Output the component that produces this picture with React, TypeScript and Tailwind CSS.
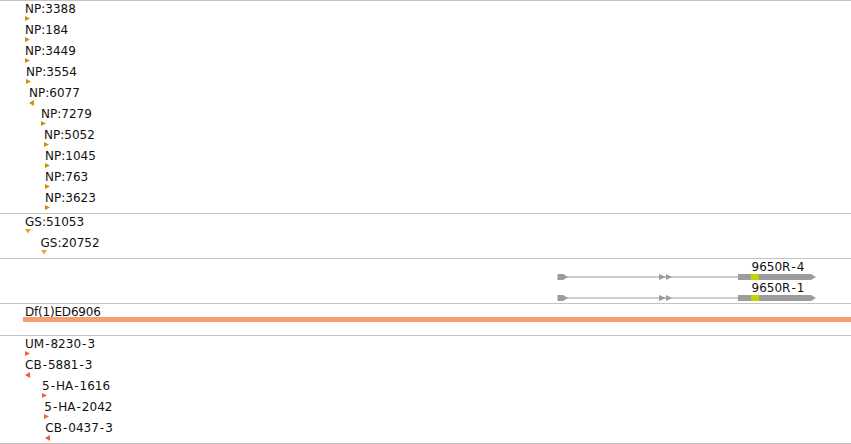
import React from "react";

type Dir = "r" | "l" | "d";
type Feat = { label: string; x: number; dir: Dir };

const Tri = ({ dir, color }: { dir: Dir; color: string }) => {
  if (dir === "d")
    return (
      <svg width="6" height="5" viewBox="0 0 6 5" className="block">
        <polygon points="0,0 6,0 3,4.5" fill={color} />
      </svg>
    );
  if (dir === "l")
    return (
      <svg width="5" height="6" viewBox="0 0 5 6" className="block">
        <polygon points="5,0 5,6 0,3" fill={color} />
      </svg>
    );
  return (
    <svg width="5" height="6" viewBox="0 0 5 6" className="block">
      <polygon points="0,0 5,2.5 0,5" fill={color} />
    </svg>
  );
};

const Text = ({ text }: { text: string }) => {
  const parts = text.split("-");
  return (
    <span className="whitespace-nowrap text-[12px] leading-[14px] text-[#111]">
      {parts.map((p, i) => (
        <React.Fragment key={i}>
          {i > 0 && <span className="px-[1px]">-</span>}
          {p}
        </React.Fragment>
      ))}
    </span>
  );
};

const FeatureTrack = ({
  feats,
  rowH,
  triGap,
  color,
  className,
}: {
  feats: Feat[];
  rowH: number;
  triGap: string;
  color: string;
  className: string;
}) => (
  <div className={`flex flex-col border-t border-[#c4c4c4] ${className}`}>
    {feats.map((f) => (
      <div
        key={f.label}
        className="flex flex-col items-start shrink-0"
        style={{ height: rowH, marginLeft: f.x }}
      >
        <Text text={f.label} />
        <div className={triGap}>
          <Tri dir={f.dir} color={color} />
        </div>
      </div>
    ))}
  </div>
);

const np: Feat[] = [
  { label: "NP:3388", x: 25, dir: "r" },
  { label: "NP:184", x: 25, dir: "r" },
  { label: "NP:3449", x: 25, dir: "r" },
  { label: "NP:3554", x: 26, dir: "r" },
  { label: "NP:6077", x: 29, dir: "l" },
  { label: "NP:7279", x: 41, dir: "r" },
  { label: "NP:5052", x: 44, dir: "r" },
  { label: "NP:1045", x: 45, dir: "r" },
  { label: "NP:763", x: 45, dir: "r" },
  { label: "NP:3623", x: 45, dir: "r" },
];

const gs: Feat[] = [
  { label: "GS:51053", x: 25, dir: "d" },
  { label: "GS:20752", x: 40.5, dir: "d" },
];

const um: Feat[] = [
  { label: "UM-8230-3", x: 25, dir: "r" },
  { label: "CB-5881-3", x: 25, dir: "l" },
  { label: "5-HA-1616", x: 42, dir: "r" },
  { label: "5-HA-2042", x: 44.3, dir: "r" },
  { label: "CB-0437-3", x: 45.3, dir: "l" },
];

const Gene = () => (
  <svg width="272" height="8" viewBox="550 0 272 8" className="block">
    <rect x="565" y="3.5" width="175" height="1" fill="#9c9c9c" />
    <polygon points="557.5,1 563,1 568,4 563,7 557.5,7" fill="#9c9c9c" />
    <polygon points="659,1 666,4 659,7" fill="#9c9c9c" />
    <polygon points="666,1 672,4 666,7" fill="#9c9c9c" />
    <polygon points="738,1 811,1 816,4 811,7 738,7" fill="#9c9c9c" />
    <rect x="751" y="1" width="8" height="6" fill="#c5d400" />
  </svg>
);

const GeneRow = ({ name }: { name: string }) => (
  <div className="ml-[550px] flex h-[21px] shrink-0 flex-col items-start">
    <div className="ml-[201.5px] flex">
      <Text text={name} />
    </div>
    <div className="-mt-[0.5px] flex">
      <Gene />
    </div>
  </div>
);

export default function App() {
  return (
    <div className="flex h-[444px] w-[851px] flex-col overflow-hidden bg-white font-['DejaVu_Sans',sans-serif]">
      <FeatureTrack
        feats={np}
        rowH={21}
        triGap="mt-[0.6px]"
        color="#d38d10"
        className="h-[213px] pt-[0.6px]"
      />
      <FeatureTrack
        feats={gs}
        rowH={20.5}
        triGap="mt-0"
        color="#eea31c"
        className="h-[45px] pt-[1.1px]"
      />
      <div className="flex h-[45px] flex-col border-t border-[#c4c4c4] pt-[0.9px]">
        <GeneRow name="9650R-4" />
        <GeneRow name="9650R-1" />
      </div>
      <div className="flex h-[32px] flex-col border-t border-[#c4c4c4] pl-[23px] pt-[1.3px]">
        <div className="ml-[2px] flex tracking-[-0.2px]">
          <Text text="Df(1)ED6906" />
        </div>
        <div className="-mt-[2.3px] h-[5px] bg-[#f4a06e]" />
      </div>
      <FeatureTrack
        feats={um}
        rowH={21}
        triGap="mt-0"
        color="#f25d3a"
        className="h-[109px] border-b pt-[0.9px]"
      />
    </div>
  );
}
